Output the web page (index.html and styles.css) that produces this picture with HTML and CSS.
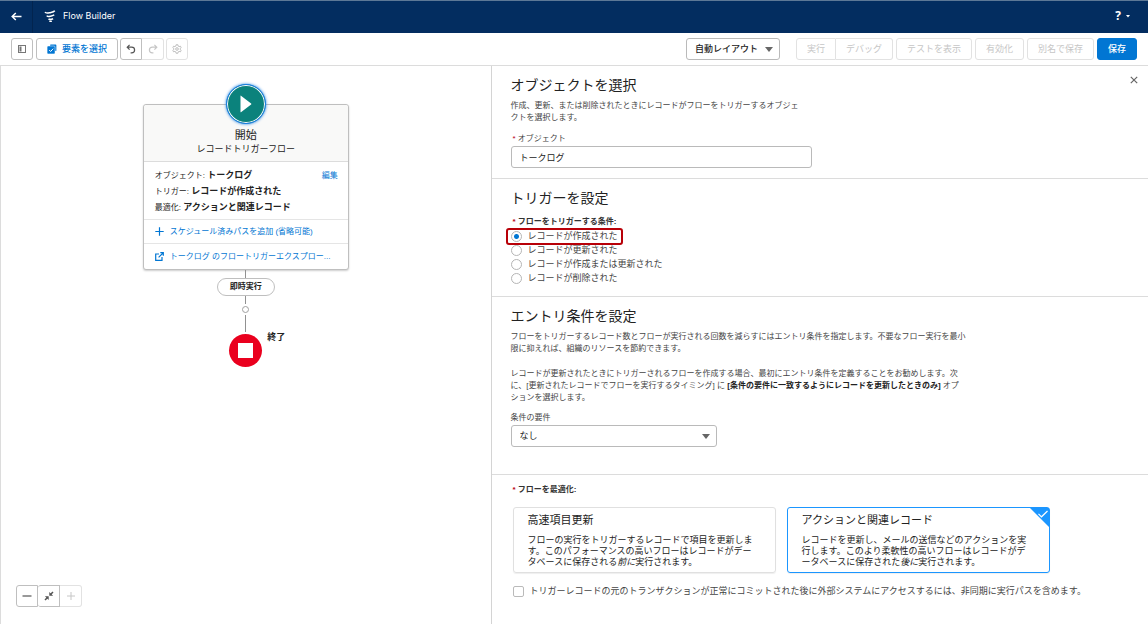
FILE: index.html
```html
<!DOCTYPE html>
<html lang="ja">
<head>
<meta charset="utf-8">
<meta name="viewport" content="width=device-width, initial-scale=1">
<title>Flow Builder</title>
<link rel="stylesheet" href="styles.css">
</head>
<body>
<header class="topbar">
  <button class="back" type="button" aria-label="戻る">
    <svg width="11" height="9" viewBox="0 0 11 9" fill="none" stroke="currentColor" stroke-width="1.5"><path d="M10.5 4.5H1.3M4.8 1 1.2 4.5 4.8 8"/></svg>
  </button>
  <svg class="brand-icon" width="12" height="12" viewBox="0 0 12 12" fill="none" stroke="currentColor" stroke-width="1.5"><path d="M1 2c.8 1.500 2.400 1.200 4.400.7C7.400 2.200 9.400 2.400 10.800.8M2.800 5.600c.8 1.200 2 1 3.400.6C7.600 5.800 9 6 10.200 4.800M4.600 8.800c.6.800 1.400.7 2.200.5.800-.2 1.500 0 2.200-.7M5.400 11.200c.8.300 1.500.2 2.300-.2"/></svg>
  <span class="brand">Flow Builder</span>
  <button class="help" type="button" aria-label="ヘルプ">
    <span>?</span>
    <svg width="4" height="3" viewBox="0 0 4 3"><path d="M0 0h4L2 2.500z" fill="currentColor"/></svg>
  </button>
</header>

<div class="toolbar">
  <button class="btn icon" type="button" aria-label="ツールボックスを切り替え">
    <svg width="8" height="8" viewBox="0 0 8 8"><rect x=".5" y=".5" width="7" height="7" fill="none" stroke="#777"/><path d="M1.500 1.500h2v5h-2z" fill="#777"/></svg>
  </button>
  <button class="btn pick" type="button">
    <svg width="10" height="10" viewBox="0 0 10 10"><path d="M3 1.500Q3 .6 3.800.6h4.800q.8 0 .8.8v4.800q0 .9-.8.900z" fill="#0176d3"/><rect x=".1" y="2" width="7.900" height="7.900" rx="1" fill="#0176d3" stroke="#fff" stroke-width=".5"/><path d="m2.200 6 1.400 1.500L6.200 4.700" fill="none" stroke="#fff"/></svg>
    要素を選択
  </button>
  <div class="group">
    <button class="btn icon" type="button" aria-label="元に戻す">
      <svg width="10" height="10" viewBox="0 0 10 10" fill="none" stroke="#555" stroke-width="1.200"><path d="M3.600.8 1.200 3.200l2.400 2.400M1.400 3.200h4.200q3 0 3 2.800T5.600 8.900h-1"/></svg>
    </button>
    <button class="btn icon" type="button" disabled aria-label="やり直し">
      <svg width="10" height="10" viewBox="0 0 10 10" fill="none" stroke="#c6c6c6" stroke-width="1.200"><path d="m6.400.8 2.400 2.400-2.400 2.400M8.600 3.200H4.400q-3 0-3 2.800t3 2.900h1"/></svg>
    </button>
  </div>
  <button class="btn icon" type="button" disabled aria-label="設定">
    <svg width="10" height="10" viewBox="0 0 10 10" fill="none" stroke="#bdbdbd" stroke-width="1"><path d="M4.200.7h1.600l.3 1.300 1 .6 1.300-.4.8 1.400-1 .9v1l1 .9-.8 1.400-1.300-.4-1 .6-.3 1.300H4.200L3.900 8l-1-.6-1.300.4-.8-1.400 1-.9v-1l-1-.9.8-1.400 1.300.4 1-.6z"/><circle cx="5" cy="5" r="1.300"/></svg>
  </button>
  <select class="layout" aria-label="レイアウト"><option>自動レイアウト</option></select>
  <div class="actions">
    <div class="group">
      <button class="btn" type="button" disabled>実行</button>
      <button class="btn" type="button" disabled>デバッグ</button>
    </div>
    <button class="btn" type="button" disabled>テストを表示</button>
    <button class="btn" type="button" disabled>有効化</button>
    <button class="btn" type="button" disabled>別名で保存</button>
    <button class="btn save" type="button">保存</button>
  </div>
</div>

<main class="workspace">
  <section class="canvas" aria-label="フロー">
    <article class="start">
      <div class="start-head">
        <span class="start-icon"><svg width="12" height="18" viewBox="0 0 12 18"><path d="M.5 1.200q0-1 .8-.3l9.800 7.500q.6.600 0 1.200l-9.800 7.500q-.8.600-.8-.3z" fill="#fff"/></svg></span>
        <h1>開始</h1>
        <p>レコードトリガーフロー</p>
      </div>
      <div class="start-info">
        <a class="edit" href="#">編集</a>
        <p>オブジェクト: <b>トークログ</b></p>
        <p>トリガー: <b>レコードが作成された</b></p>
        <p>最適化: <b>アクションと関連レコード</b></p>
      </div>
      <a class="start-link" href="#">
        <svg width="9" height="9" viewBox="0 0 9 9" fill="none" stroke="currentColor" stroke-width="1.200"><path d="M4.500.3v8.400M.3 4.500h8.400"/></svg>
        <span>スケジュール済みパスを追加 (省略可能)</span>
      </a>
      <a class="start-link" href="#">
        <svg width="9" height="9" viewBox="0 0 9 9" fill="none" stroke="currentColor" stroke-width="1.200"><path d="M4 2H.7v6.300H7V5M5.300.7h3v3M8.300.7 3.600 5.400"/></svg>
        <span>トークログ のフロートリガーエクスプロー...</span>
      </a>
    </article>
    <span class="wire"></span>
    <span class="pill">即時実行</span>
    <span class="wire"></span>
    <button class="add" type="button" aria-label="要素を追加"></button>
    <span class="wire long"></span>
    <div class="end"><span class="end-label">終了</span></div>
    <div class="group zoom">
      <button class="btn icon" type="button" aria-label="縮小"><svg width="10" height="10" viewBox="0 0 10 10"><path d="M.5 5h9" stroke="#555" stroke-width="1.200"/></svg></button>
      <button class="btn icon" type="button" aria-label="全体を表示"><svg width="10" height="10" viewBox="0 0 10 10" stroke="#555" fill="#555"><path d="M5.300.9v3.800h3.800zM4.700 9.100V5.300H.9z" stroke="none"/><path d="M6.500 3.500 9 1M3.500 6.500 1 9" stroke-width="1.500"/></svg></button>
      <button class="btn icon" type="button" disabled aria-label="拡大"><svg width="10" height="10" viewBox="0 0 10 10"><path d="M1 5h8M5 1v8" stroke="#c6c6c6"/></svg></button>
    </div>
  </section>

  <form class="panel">
    <section class="block">
      <div class="block-head">
        <h2>オブジェクトを選択</h2>
        <button class="close" type="button" aria-label="閉じる"><svg width="8" height="8" viewBox="0 0 8 8"><path d="m.8.8 6.400 6.400M7.200.8.8 7.200" stroke="#666" stroke-width="1.200"/></svg></button>
      </div>
      <p class="help-text narrow">作成、更新、または削除されたときにレコードがフローをトリガーするオブジェクトを選択します。</p>
      <label class="label required" for="object">オブジェクト</label>
      <input class="text" id="object" type="text" value="トークログ">
    </section>

    <section class="block">
      <h2>トリガーを設定</h2>
      <fieldset class="choices">
        <legend class="label required strong">フローをトリガーする条件:</legend>
        <label class="radio marked"><input type="radio" name="trigger" checked>レコードが作成された</label>
        <label class="radio"><input type="radio" name="trigger">レコードが更新された</label>
        <label class="radio"><input type="radio" name="trigger">レコードが作成または更新された</label>
        <label class="radio"><input type="radio" name="trigger">レコードが削除された</label>
      </fieldset>
    </section>

    <section class="block entry">
      <h2>エントリ条件を設定</h2>
      <p class="help-text">フローをトリガーするレコード数とフローが実行される回数を減らすにはエントリ条件を指定します。不要なフロー実行を最小限に抑えれば、組織のリソースを節約できます。</p>
      <p class="help-text">レコードが更新されたときにトリガーされるフローを作成する場合、最初にエントリ条件を定義することをお勧めします。次に、[更新されたレコードでフローを実行するタイミング] に <b>[条件の要件に一致するようにレコードを更新したときのみ]</b> オプションを選択します。</p>
      <label class="label" for="criteria">条件の要件</label>
      <select class="criteria" id="criteria"><option>なし</option></select>
    </section>

    <section class="block">
      <fieldset class="optimize">
        <legend class="label required strong">フローを最適化:</legend>
        <div class="cards">
          <label class="card"><input type="radio" name="optimize">
            <span class="card-title">高速項目更新</span>
            <span class="card-text">フローの実行をトリガーするレコードで項目を更新します。このパフォーマンスの高いフローはレコードがデータベースに保存される<i>前に</i>実行されます。</span>
          </label>
          <label class="card"><input type="radio" name="optimize" checked>
            <span class="card-title">アクションと関連レコード</span>
            <span class="card-text">レコードを更新し、メールの送信などのアクションを実行します。このより柔軟性の高いフローはレコードがデータベースに保存された<i>後に</i>実行されます。</span>
            <svg class="tick" width="19" height="19" viewBox="0 0 19 19"><path d="M0 0h19v19z" fill="#1b96ff"/><path d="m8.500 5.800 3 3L17.500 3" fill="none" stroke="#fff" stroke-width="1.200"/></svg>
          </label>
        </div>
      </fieldset>
      <label class="check"><input type="checkbox">トリガーレコードの元のトランザクションが正常にコミットされた後に外部システムにアクセスするには、非同期に実行パスを含めます。</label>
    </section>
  </form>
</main>
</body>
</html>
```
FILE: styles.css
```css
* { box-sizing: border-box; }

body {
  margin: 0;
  min-height: 100vh;
  display: flex;
  flex-direction: column;
  background: #fff;
  color: #222;
  font: 9px/12px "Liberation Sans", "Noto Sans CJK JP", sans-serif;
}

h1, h2, p, fieldset, legend { margin: 0; padding: 0; border: 0; font-weight: 400; }
button, input, select { font: inherit; color: inherit; margin: 0; }
button { padding: 0; border: 0; background: none; }
a { color: #0176d3; text-decoration: none; }
b, i { line-height: 1; }
svg { display: block; flex: none; }

.topbar {
  display: flex;
  align-items: center;
  height: 33px;
  padding-bottom: 2px;
  background: #032d60;
  border-top: 1px solid #5d7896;
  color: #fff;
}
.back {
  width: 33px;
  align-self: stretch;
  display: grid;
  place-items: center;
  margin-bottom: -2px;
  padding-bottom: 2px;
  border-right: 1px solid #02244f;
}
.brand-icon { margin: 0 7px 0 11px; }
.brand { font: 400 9px/12px Inter, Roboto, sans-serif; }
.help {
  display: flex;
  align-items: center;
  gap: 5px;
  margin-left: auto;
  padding-right: 18px;
  font: 700 12px/16px "Open Sans", sans-serif;
}

.toolbar {
  display: flex;
  align-items: center;
  gap: 2px;
  height: 33px;
  padding: 0 11px;
  border-bottom: 1px solid #dcdcdc;
}
.btn {
  display: flex;
  align-items: center;
  justify-content: center;
  height: 22px;
  padding: 0 10px;
  border: 1px solid #bfbfbf;
  border-radius: 3px;
  background: #fff;
  white-space: nowrap;
}
.btn.icon { width: 22px; padding: 0; }
.btn:disabled { color: #c6c6c6; border-color: #e2e2e2; }
.pick { gap: 5px; margin-left: 1px; color: #0176d3; font-weight: 500; }
.save { background: #0176d3; border-color: #0176d3; color: #fff; font-weight: 500; }
.actions { display: flex; gap: 3px; }
.group { display: flex; }
.group .btn:not(:first-child) { border-left: 0; border-radius: 0 3px 3px 0; }
.group .btn:not(:last-child) { border-radius: 3px 0 0 3px; }

select {
  appearance: none;
  height: 22px;
  border: 1px solid #bababa;
  border-radius: 3px;
  background: #fff url("data:image/svg+xml,%3Csvg xmlns='http://www.w3.org/2000/svg' width='8' height='5'%3E%3Cpath d='M0 0h8L4 5z' fill='%23666'/%3E%3C/svg%3E") no-repeat right 6px center;
  padding: 0 24px 0 8px;
}
.layout { margin: 0 14px 0 auto; padding-right: 20px; width: 94px; font-weight: 500; }

.workspace { flex: 1; display: flex; border-left: 1px solid #dcdcdc; }

.canvas {
  position: relative;
  flex: 490;
  min-width: 0;
  display: flex;
  flex-direction: column;
  align-items: center;
  padding-top: 38px;
}
.start {
  width: 206px;
  border: 1px solid #bfbfbf;
  border-radius: 3px;
  background: #fff;
  box-shadow: 0 1px 2px #0003;
}
.start-head {
  display: flex;
  flex-direction: column;
  align-items: center;
  padding-bottom: 6px;
  border-bottom: 1px solid #dcdcdc;
  border-radius: 3px 3px 0 0;
  background: #f9f9f8;
}
.start-icon {
  width: 40px;
  height: 40px;
  margin-top: -21px;
  display: grid;
  place-items: center;
  padding-left: 1px;
  border: 1px solid #1b7fe0;
  border-radius: 50%;
  background: #0b827c;
  box-shadow: inset 0 0 0 1px #fff, 0 0 3px #1b7fe0;
}
.start-head h1 { margin-top: 3px; font-size: 11px; line-height: 16px; }
.start-head p { line-height: 12px; }
.start-info { padding: 6px 10px 3px 11px; font-size: 8px; line-height: 16px; }
.start-info b { font-size: 9px; }
.edit { float: right; }
.start-link {
  display: flex;
  align-items: center;
  gap: 6px;
  height: 24px;
  padding: 0 12px 0 11px;
  border-top: 1px solid #e5e5e5;
  font-size: 8px;
}
.start-link:last-child { height: 26px; }
.start-link span { white-space: nowrap; }
.wire { width: 1px; height: 8px; background: #919191; }
.wire.long { height: 17px; }
.pill {
  padding: 2px 12px;
  border: 1px solid #bfbfbf;
  border-radius: 9px;
  font-size: 8px;
  font-weight: 700;
}
.add {
  width: 7px;
  height: 7px;
  margin: 2px 0;
  border: 1px solid #a0a0a0;
  border-radius: 50%;
  background: #fff;
}
.end {
  position: relative;
  width: 33px;
  height: 33px;
  margin-top: 2px;
  border-radius: 50%;
  background: #ea001e;
  display: grid;
  place-items: center;
}
.end::before { content: ""; width: 15px; height: 15px; background: #fff; }
.end-label { position: absolute; left: 38px; top: -3px; font-weight: 700; white-space: nowrap; }
.zoom { position: absolute; left: 15px; bottom: 17px; }

.panel { flex: 657; min-width: 0; border-left: 1px solid #d4d4d4; }
.block { padding: 9px 10px 10px 19px; }
.block + .block { border-top: 1px solid #dcdcdc; }
.block-head { display: flex; justify-content: space-between; }
.close { align-self: flex-start; padding-top: 1px; }
h2 { font-size: 14px; line-height: 20px; }
.help-text {
  max-width: 460px;
  margin: 5px 0 9px;
  font-size: 8px;
  line-height: 12px;
  color: #444;
  line-break: loose;
}
.help-text.narrow { max-width: 294px; }
.help-text b { color: #222; }
.help-text + .help-text { max-width: 453px; margin-top: 13px; }
.label { display: block; font-size: 8px; line-height: 12px; color: #444; }
.required::before { content: "*"; margin: 0 2px; color: #ba0517; }
.strong { font-weight: 700; color: #333; }
.text {
  display: block;
  width: 100%;
  max-width: 301px;
  height: 22px;
  margin-top: 1px;
  padding: 0 8px;
  border: 1px solid #bababa;
  border-radius: 3px;
}
.choices { margin-top: 8px; padding-bottom: 1px; }
.choices legend { margin-bottom: 1px; }
.radio {
  position: relative;
  display: flex;
  align-items: center;
  gap: 6px;
  width: max-content;
  height: 14px;
  color: #444;
}
.radio input {
  appearance: none;
  width: 11px;
  height: 11px;
  border: 1px solid #b5b5b5;
  border-radius: 50%;
}
.radio input:checked { background: radial-gradient(circle, #0176d3 2px, #fff 3px); }
.marked::after {
  content: "";
  position: absolute;
  inset: -1px -5px -2px;
  border: 2px solid #b80008;
  border-radius: 3px;
}
.entry { padding-bottom: 27px; }
.entry .help-text + .label { margin-top: 8px; }
.entry .help-text + .help-text { margin-bottom: 8px; }
.criteria { display: block; width: 206px; margin-top: 1px; }

.optimize { padding-top: 1px; }
.cards { display: flex; gap: 11px; margin: 10px 0 12px 2px; }
.card {
  position: relative;
  flex: 0 1 263px;
  padding: 4px 20px 4px 14px;
  border: 1px solid #e0e0e0;
  border-radius: 3px;
  box-shadow: 0 1px 1px #0001;
}
.card:has(:checked) { border-color: #1b96ff; }
.card input { position: absolute; opacity: 0; }
.card-title { display: block; font-size: 11px; line-height: 16px; }
.card-text { display: block; margin-top: 7px; line-height: 11px; line-break: loose; }
.tick { position: absolute; top: 0; right: 0; }
.check { display: flex; align-items: center; gap: 6px; padding-left: 2px; color: #444; }
.check input {
  appearance: none;
  width: 11px;
  height: 11px;
  border: 1px solid #bababa;
  border-radius: 2px;
}
```
